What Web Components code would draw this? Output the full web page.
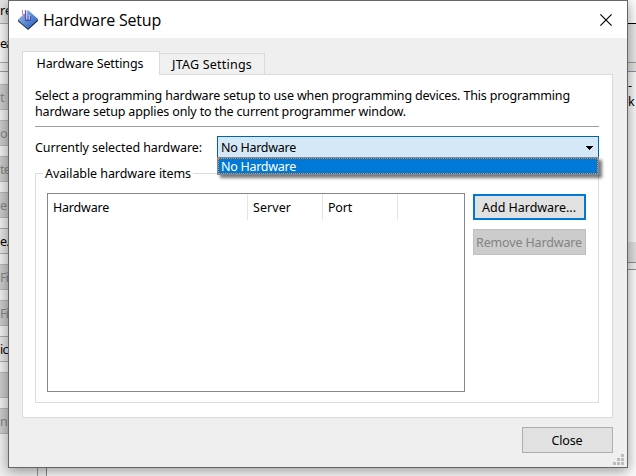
<!DOCTYPE html>
<html lang="en"><head><meta charset="utf-8"><title>Hardware Setup</title>
<style>html,body{margin:0;width:636px;height:476px;overflow:hidden;background:#efefef;font:12.5px/16px "Noto Sans","Open Sans",sans-serif;color:#000}</style></head><body>
<desktop-scene></desktop-scene>
<script>
const define=(name,html,after)=>customElements.define(name,class extends HTMLElement{
  connectedCallback(){
    if(this.shadowRoot)return;
    const t=document.createElement('template');t.innerHTML=html;
    this.attachShadow({mode:'open'}).append(t.content.cloneNode(true));
    if(after)after(this);
  }
});
/* Text run with a fixed advance width: spreads the difference over its letters. */
define('fit-text','<style>:host{display:inline-block;white-space:nowrap;flex:none}span{display:inline-block;white-space:nowrap}</style><span></span>',el=>{
  const s=el.shadowRoot.querySelector('span');s.textContent=el.getAttribute('text');
  const w=+el.getAttribute('w');
  if(w){const n=s.textContent.length;s.style.letterSpacing=((w-s.getBoundingClientRect().width)/n)+'px';el.style.width=w+'px';}
});
define('side-row',`<style>:host{display:block;box-sizing:border-box;height:26px;margin-bottom:10px;background:#cacaca;border:solid #b5b5b5;border-width:1px 0;color:#858585;line-height:26px;white-space:nowrap}
:host([on]){background:#e4e4e4;border-color:#aaa;color:#000}div{height:24px;letter-spacing:-.7px}</style><div><slot></slot></div>`);
define('back-window',`<style>
:host{position:absolute;inset:0;display:flex;justify-content:space-between;background:#efefef}
.left{width:9px;white-space:nowrap}
.left div,.right div{box-sizing:border-box}
.a,.b{letter-spacing:-1.4px}
.a{height:24px;background:#e3e3e3;border-bottom:1px solid #aaa;line-height:21px}
.b{height:39px;background:#f6f6f6;border-bottom:1px solid #aaa;line-height:39px}
.a{letter-spacing:0}
.c{height:9px;background:#eee;border-bottom:1px solid #999}
.gap{height:12px}
.right{width:9px;background:#f3f3f3}
.r1{height:24px;background:#fcfcfc;border-bottom:1px solid #000}
.r2{height:39px;background:#e5e5e5;border-bottom:1px solid #999}
.r3{height:9px;background:#e0e0e0;border-bottom:1px solid #8c929c}
.r4{height:170px;background:#f6f6f6;padding:6px 0 0 1px}
.r4 span{display:block;height:16px}
.r5{height:21px;background:#dedede;border-bottom:1px solid #8c929c}
.r6{height:7px;background:#efefef;border-bottom:1px solid #8c929c}
.r7{height:206px;background:#fbfbfb}
.foot{flex:1;align-self:flex-end;height:8px;display:flex}
.foot i{box-sizing:border-box;width:29px;border-right:1px solid #999}.foot b{box-sizing:border-box;width:9px;border-right:1px solid #858b95}.foot u{flex:1;background:#fbfbfb}
</style>
<div class="left"><div class="a">re</div><div class="b">ea</div><div class="c"></div><div class="gap"></div>
<side-row>t</side-row><side-row>o</side-row><side-row>te</side-row><side-row>e</side-row><side-row on>e.</side-row><side-row>Fi</side-row><side-row>Fil</side-row><side-row on>ic</side-row><side-row></side-row><side-row>n</side-row></div>
<div class="foot"><i></i><b></b><u></u></div>
<div class="right"><div class="r1"></div><div class="r2"></div><div class="r3"></div><div class="r4"><span>-</span><span>k</span></div><div class="r5"></div><div class="r6"></div><div class="r7"></div></div>`);
define('push-button',`<style>:host{box-sizing:border-box;display:flex;align-items:center;justify-content:center;height:26px;width:113px;background:#e1e1e1;border:1px solid #adadad;padding:1px 1px 0 0}
:host([focused]){border:2px solid #0078d7}:host([off]){background:#ccc;border-color:#bfbfbf;color:#838383}:host([close]){width:91px}</style><slot></slot>`);
define('title-bar',`<style>:host{display:flex;box-sizing:border-box;height:37px;background:#fff;padding:0 15px 0 9px;align-items:center;font:16px/24px "Open Sans","Noto Sans",sans-serif}
.icon{margin-right:5px}.x{margin-left:auto}</style>
<svg class="icon" width="20" height="20" viewBox="0 0 20 20"><defs><linearGradient id="g" x1="0" y1="0" x2="1" y2="1"><stop stop-color="#a9c6ef"/><stop offset=".5" stop-color="#5c8bd9"/><stop offset="1" stop-color="#2456ae"/></linearGradient></defs>
<path d="M0 9.5 10 18v2L0 11.5Z" fill="#33415f"/><path d="M10 18 20 9v2L10 20Z" fill="#16284f"/><path d="M10 0 20 9 10 18.4 0 9.5Z" fill="url(#g)"/>
<path d="M4.5 0v4.5h2v4h1" fill="none" stroke="#cf6d8f" stroke-opacity=".85"/><path d="M7.5 0v10.5h5V6M10 5.500v5" fill="none" stroke="#4a479f" stroke-opacity=".85"/><path d="M8.700 0v9M6.500 0v4M11.200 5v4.500" fill="none" stroke="#dce6ff" stroke-opacity=".8"/></svg>
<slot></slot><svg class="x" width="12" height="12" viewBox="0 0 12 12"><path d="M.4.4 11.6 11.6M11.6.4.4 11.6" stroke="#000" stroke-width="1.15"/></svg>`);
define('tab-strip',`<style>:host{display:flex;align-items:flex-end;height:24px;margin-bottom:-1px;position:relative}
div{box-sizing:border-box;display:flex;justify-content:center;border:1px solid #dadada}
.on{width:138px;height:24px;background:#fff;border-bottom:0;padding:4px 2px 0 0}.off{width:105px;height:22px;background:#f0f0f0;border-left:0;padding-top:3px;}</style>
<div class="on"><fit-text text="Hardware Settings" w="107"></fit-text></div><div class="off"><fit-text text="JTAG Settings" w="80"></fit-text></div>`);
define('hardware-select',`<style>:host{display:block;position:relative;width:382px;height:22px}
.field{box-sizing:border-box;height:22px;border:1px solid #0063b1;background:#d5e8f7;display:flex;align-items:center;justify-content:space-between;padding:1px 5px 0 3px}
.menu{position:absolute;z-index:3;top:21px;left:0;width:382px;height:18px;box-sizing:border-box;background:#0078d7;border:1px solid #7d8796;color:#fff;box-shadow:3px 3px 3px #0008}
.item{height:16px;box-sizing:border-box;outline:1px dotted #f28c32;outline-offset:-1px;padding-left:3px;line-height:17px}</style>
<div class="field"><fit-text text="No Hardware" w="75"></fit-text><svg width="7" height="4" shape-rendering="crispEdges"><path d="M0 0h7v1H6v1H5v1H4v1H3V3H2V2H1V1H0Z"/></svg></div>
<div class="menu"><div class="item"><fit-text text="No Hardware" w="75"></fit-text></div></div>`);
define('hardware-table',`<style>:host{box-sizing:border-box;display:block;width:418px;height:199px;border:1px solid #828790;background:#fff}
.head{display:grid;grid-template-columns:200px 75px 75px;height:26px}
.head div{box-sizing:border-box;border-right:1px solid #e5e5e5;padding:6px 0 0 5px}</style>
<div class="head"><div><fit-text text="Hardware" w="56"></fit-text></div><div><fit-text text="Server" w="38"></fit-text></div><div><fit-text text="Port" w="24"></fit-text></div></div>`);
define('group-box',`<style>:host{position:relative;box-sizing:border-box;display:flex;gap:8px;width:564px;height:230px;border:1px solid #dcdcdc;padding:19px 11px 0}
.cap{position:absolute;left:7px;top:-8px;background:#fff;padding:0 2px}</style><div class="cap"><slot name="caption"></slot></div><slot></slot>`);
define('size-grip',`<style>:host{position:absolute;right:3px;bottom:2px;line-height:0}</style><svg width="11" height="11" fill="#bdbdbd"><path d="M8 0h3v3H8ZM4 4h3v3H4ZM8 4h3v3H8ZM0 8h3v3H0ZM4 8h3v3H4ZM8 8h3v3H8Z"/></svg>`);
define('setup-dialog',`<style>
:host{position:absolute;left:8px;top:0;box-sizing:border-box;width:620px;height:468px;border:1px solid #666;background:#efefef;box-shadow:0 3px 12px #0006}
main{padding:13px 14px 0 13px}
.panel{box-sizing:border-box;height:344px;width:591px;border:1px solid #dadada;background:#fff;padding:13px 12px 0}
.hr{height:1px;background:#a0a0a0;margin:6px 0 9px;width:564px}
.row{display:flex;justify-content:space-between;width:564px;margin-bottom:15px}
.row>fit-text{padding-top:4px}
.buttons{display:flex;flex-direction:column;gap:9px;padding-top:1px}
footer{display:flex;justify-content:flex-end;padding:9px 0 0}
.line{height:16px}
</style>
<title-bar><fit-text text="Hardware Setup" w="118"></fit-text></title-bar>
<main><tab-strip></tab-strip><div class="panel">
<div class="line"><fit-text text="Select a programming hardware setup to use when programming devices. This programming" w="535"></fit-text></div>
<div class="line"><fit-text text="hardware setup applies only to the current programmer window." w="371"></fit-text></div>
<div class="hr"></div>
<div class="row"><fit-text text="Currently selected hardware:" w="167"></fit-text><hardware-select></hardware-select></div>
<group-box><fit-text slot="caption" text="Available hardware items" w="146"></fit-text><hardware-table></hardware-table>
<div class="buttons"><push-button focused><fit-text text="Add Hardware..." w="94"></fit-text></push-button><push-button off><fit-text text="Remove Hardware" w="106"></fit-text></push-button></div></group-box>
</div><footer><push-button close><fit-text text="Close" w="31"></fit-text></push-button></footer></main><size-grip></size-grip>`);
define('desktop-scene',`<style>:host{display:block;position:relative;width:636px;height:476px;overflow:hidden}</style><back-window></back-window><setup-dialog></setup-dialog>`);
</script></body></html>
